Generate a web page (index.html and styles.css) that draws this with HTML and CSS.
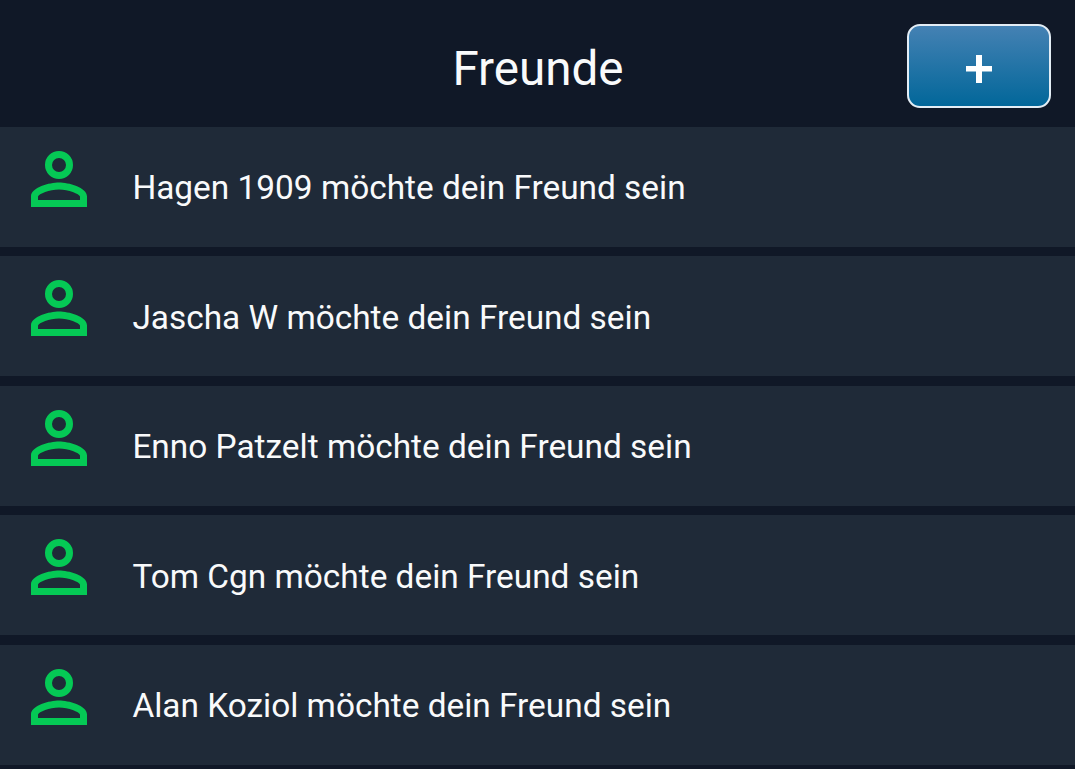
FILE: index.html
```html
<!DOCTYPE html>
<html lang="de">
	<head>
		<meta charset="UTF-8" />
		<meta name="viewport" content="width=device-width, initial-scale=1.0" />
		<title>Freunde</title>
		<link rel="stylesheet" href="styles.css">
	</head>
	<body>
		<svg class="sprite" aria-hidden="true">
			<symbol id="person" viewBox="0 0 24 24">
				<path fill-rule="evenodd" d="M12 4a4 4 0 1 0 0 8 4 4 0 0 0 0-8zm0 6a2 2 0 1 1 0-4 2 2 0 0 1 0 4zm0 3c-2.67 0-8 1.34-8 4v3h16v-3c0-2.66-5.33-4-8-4zm6 5H6v-.99c.2-.72 3.3-2.01 6-2.01s5.8 1.29 6 2v1z" />
			</symbol>
		</svg>

		<header class="header">
			<h1 class="title">Freunde</h1>
			<button class="add-button" aria-label="Freund hinzufügen">
				<svg class="plus" viewBox="0 0 26 28">
					<path d="M10 0h6v11h10v5.5H16V28h-6V16.500H0V11h10z" />
				</svg>
			</button>
		</header>

		<ul class="requests">
			<li class="request">
				<svg class="icon"><use href="#person" /></svg>
				<span class="text">Hagen 1909 möchte dein Freund sein</span>
			</li>
			<li class="request">
				<svg class="icon"><use href="#person" /></svg>
				<span class="text">Jascha W möchte dein Freund sein</span>
			</li>
			<li class="request">
				<svg class="icon"><use href="#person" /></svg>
				<span class="text">Enno Patzelt möchte dein Freund sein</span>
			</li>
			<li class="request">
				<svg class="icon"><use href="#person" /></svg>
				<span class="text">Tom Cgn möchte dein Freund sein</span>
			</li>
			<li class="request">
				<svg class="icon"><use href="#person" /></svg>
				<span class="text">Alan Koziol möchte dein Freund sein</span>
			</li>
		</ul>
	</body>
</html>
```

FILE: styles.css
```css
body {
	margin: 0;
	font-family: Roboto, sans-serif;
	background-color: #101827;
	color: #f9fafb;
	overflow: hidden;
}
.sprite {
	display: none;
}
.header {
	display: grid;
	grid-template-columns: 1fr auto 1fr;
	align-items: start;
	height: 126.5px;
	padding: 0 24px 0 25px;
	box-sizing: border-box;
}
.title {
	grid-column: 2;
	margin: 41px 0 0;
	font-size: 47.6px;
	font-weight: 400;
	line-height: 56px;
}
.add-button {
	display: flex;
	align-items: center;
	justify-content: center;
	justify-self: end;
	width: 144px;
	height: 84px;
	margin-top: 24px;
	padding: 6px 0 0;
	border: 2px solid #e3edf5;
	border-radius: 13px;
	background: linear-gradient(#4682b4, #006699) border-box;
	box-sizing: border-box;
	cursor: pointer;
}
.plus {
	width: 26px;
	height: 28px;
	fill: #fff;
}
.requests {
	display: flex;
	flex-direction: column;
	gap: 9.5px;
	margin: 0;
	padding: 0;
	list-style: none;
}
.request {
	display: flex;
	align-items: flex-start;
	gap: 31.4px;
	height: 120px;
	padding-left: 17px;
	background-color: #1f2a38;
}
.icon {
	flex: none;
	width: 84px;
	height: 84px;
	margin-top: 10.2px;
	fill: #05c955;
}
.text {
	margin-top: 41.8px;
	font-size: 33.4px;
	line-height: 40px;
	white-space: nowrap;
}
```
